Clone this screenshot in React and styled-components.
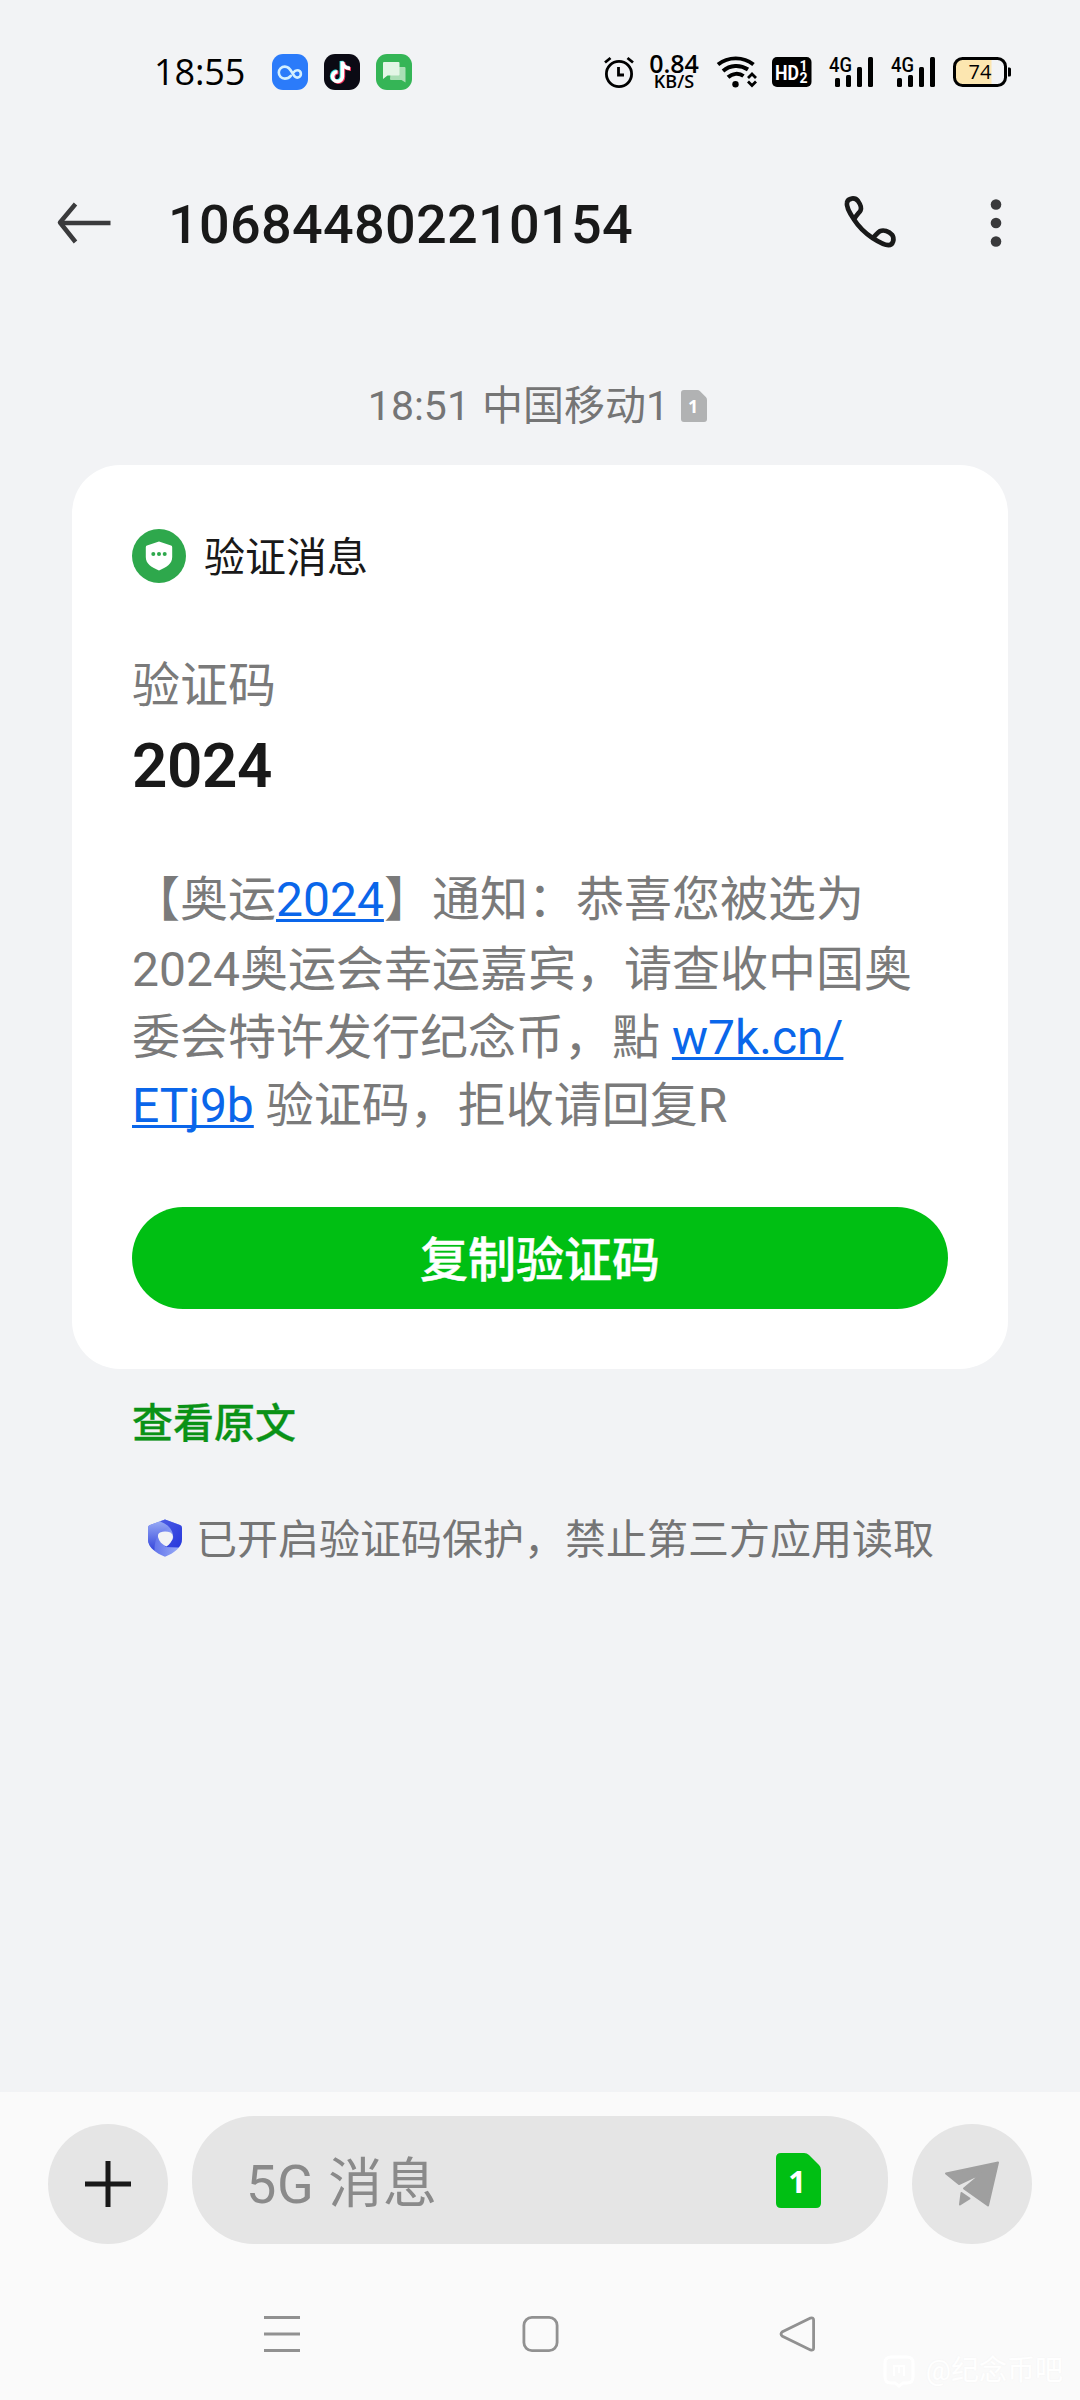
import styled, { createGlobalStyle } from "styled-components";

const GlobalStyle = createGlobalStyle`
  * {
    box-sizing: border-box;
  }
  body {
    margin: 0;
    background: #f2f3f5;
    font-family: Roboto, "Noto Sans CJK SC", sans-serif;
  }
  svg {
    display: block;
    flex-shrink: 0;
    overflow: visible;
  }
`;

const Screen = styled.div`
  position: relative;
  width: 1080px;
  height: 2400px;
  display: flex;
  flex-direction: column;
  background: #f2f3f5;
  overflow: hidden;
`;

/* status bar */

const StatusBar = styled.div`
  height: 144px;
  padding: 0 69px 0 154px;
  display: flex;
  align-items: center;
  justify-content: space-between;
  color: #000;
`;

const StatusGroup = styled.div`
  display: flex;
  align-items: center;
  gap: ${(props) => props.$gap || 0}px;
`;

const Clock = styled.div`
  width: 102px;
  font-family: "Open Sans", sans-serif;
  font-size: 36px;
  line-height: 36px;
  font-weight: 400;
  letter-spacing: -0.1px;
  white-space: nowrap;
`;

const Speed = styled.div`
  width: 52px;
  display: flex;
  flex-direction: column;
  align-items: center;
  font-family: "Open Sans", sans-serif;
  white-space: nowrap;
`;

const SpeedValue = styled.span`
  font-size: 25px;
  line-height: 19px;
  font-weight: 600;
`;

const SpeedUnit = styled.span`
  font-size: 18px;
  line-height: 17px;
  font-weight: 600;
`;

/* header */

const Header = styled.header`
  height: 158px;
  padding: 0 78px 0 56px;
  display: flex;
  align-items: center;
`;

const Title = styled.h1`
  flex: 1;
  margin: 3px 0 0 56px;
  font-size: 54px;
  line-height: 60px;
  font-weight: 500;
  letter-spacing: 0.3px;
  color: #191919;
`;

/* conversation */

const Content = styled.main`
  flex: 1;
  padding: 74px 72px 0;
  display: flex;
  flex-direction: column;
`;

const Meta = styled.div`
  height: 60px;
  padding-right: 5px;
  display: flex;
  align-items: center;
  justify-content: center;
  gap: 12px;
  font-size: 41px;
  line-height: 60px;
  word-spacing: 2px;
  color: #757575;
`;

const Card = styled.section`
  height: 904px;
  margin-top: 29px;
  padding: 64px 60px 60px;
  display: flex;
  flex-direction: column;
  background: #fff;
  border-radius: 48px;
`;

const CardHead = styled.div`
  height: 54px;
  display: flex;
  align-items: center;
  gap: 18px;
  font-size: 41px;
  line-height: 54px;
  color: #191919;
`;

const CardTitle = styled.span`
  padding-top: 3px;
`;

const Label = styled.div`
  margin-top: 73px;
  font-size: 48px;
  line-height: 60px;
  color: #7a7a7a;
`;

const Code = styled.div`
  margin-top: 15px;
  font-size: 62px;
  line-height: 70px;
  font-weight: 600;
  letter-spacing: -0.4px;
  color: #191919;
`;

const Message = styled.div`
  margin-top: 65px;
  font-size: 48px;
  color: #7a7a7a;
`;

const Line = styled.div`
  height: ${(props) => props.$height || 68}px;
  line-height: 68px;
  white-space: nowrap;
`;

const Link = styled.a`
  color: #0a66ea;
  text-decoration: underline;
  text-decoration-thickness: 3px;
  text-underline-offset: 3px;
  text-decoration-skip-ink: none;
`;

const CopyButton = styled.button`
  height: 102px;
  margin-top: 67px;
  padding: 5px 0 0;
  border: none;
  border-radius: 51px;
  background: #00bf13;
  color: #fff;
  font-family: inherit;
  font-size: 48px;
  font-weight: 500;
  line-height: 97px;
  -webkit-text-stroke: 0.5px #fff;
`;

const Original = styled.a`
  margin: 30px 0 0 60px;
  font-size: 41px;
  line-height: 50px;
  font-weight: 500;
  color: #0a9216;
  -webkit-text-stroke: 0.3px #0a9216;
`;

const Protection = styled.div`
  height: 50px;
  margin: 64px 0 0 75px;
  display: flex;
  align-items: center;
  gap: 13px;
  font-size: 41px;
  line-height: 50px;
  color: #757575;
  white-space: nowrap;
`;

const ProtectionText = styled.span`
  padding-top: 3px;
`;

/* bottom */

const Footer = styled.footer`
  height: 308px;
  padding-top: 24px;
  background: #fafafa;
`;

const Composer = styled.div`
  height: 128px;
  padding: 0 48px;
  display: flex;
  align-items: flex-end;
  gap: 24px;
`;

const RoundButton = styled.button`
  width: 120px;
  height: 120px;
  padding: 0;
  border: none;
  border-radius: 50%;
  display: flex;
  align-items: center;
  justify-content: center;
  background: #e5e5e5;
`;

const Field = styled.div`
  flex: 1;
  height: 128px;
  padding: 0 67px 0 54px;
  border-radius: 62px;
  display: flex;
  align-items: center;
  justify-content: space-between;
  background: #e5e5e5;
`;

const Placeholder = styled.span`
  padding-top: 9px;
  font-size: 54px;
  line-height: 64px;
  letter-spacing: 0.6px;
  color: #8a8a8a;
`;

const NavBar = styled.nav`
  height: 156px;
  padding: 24px 263px 0;
  display: flex;
  align-items: center;
  justify-content: space-between;
`;

const Watermark = styled.div`
  position: absolute;
  right: 17px;
  bottom: 9px;
  display: flex;
  align-items: center;
  gap: 11px;
  font-size: 28px;
  line-height: 40px;
  color: #fff;
  text-shadow: 0 0 2px #f3f3f3;
`;

const CloudAppIcon = () => (
  <svg width="36" height="36" viewBox="0 0 36 36" fill="none">
    <rect width="36" height="36" rx="11" fill="#2b7bfa" />
    <path
      d="M18.800 21.800c-1.700 2-3.500 2.800-6 2.800a6 6 0 1 1 0-12c3.800 0 5.700 3 7.200 5.800 1.400 2.700 2.600 5.200 5.200 5.200a3.700 3.700 0 0 0 0-7.400c-2 0-3 1.200-4.200 2.800"
      stroke="#d3efff"
      strokeWidth="2.600"
      strokeLinecap="round"
    />
  </svg>
);

const MusicAppIcon = () => {
  const note = "M18.200 7.500V22.500a4.900 4.900 0 1 1-4.900-4.900M18.200 7.500c.4 4 3.200 6.600 7.600 6.800";
  return (
    <svg width="36" height="36" viewBox="0 0 36 36" fill="none" strokeWidth="3.600">
      <rect width="36" height="36" rx="11" fill="#0b0a14" />
      <path d={note} transform="translate(-.8 -.6)" stroke="#35e6e4" />
      <path d={note} transform="translate(1.200 .8)" stroke="#f7305a" />
      <path d={note} transform="translate(.2 .1)" stroke="#fff" />
    </svg>
  );
};

const ChatAppIcon = () => (
  <svg width="36" height="36" viewBox="0 0 36 36">
    <rect width="36" height="36" rx="11" fill="#35b556" />
    <path d="M15 13h13.500a1 1 0 0 1 1 1v14.500L25.500 26H15a1 1 0 0 1-1-1z" fill="#a9dfb5" />
    <path d="M8 8h14.500a1 1 0 0 1 1 1v11.500a1 1 0 0 1-1 1H11.500L7 25V9a1 1 0 0 1 1-1z" fill="#e3f6e6" />
  </svg>
);

const AlarmIcon = () => (
  <svg width="32" height="32" viewBox="0 0 32 32" fill="none" stroke="#000" strokeWidth="2.800">
    <circle cx="15" cy="18" r="12.600" />
    <path d="M14.500 11v8h5.500M1 6.500 6.500 2M29 6.500 23.500 2" />
  </svg>
);

const WifiIcon = () => (
  <svg width="40" height="32" viewBox="0 0 40 32" fill="none">
    <path
      d="M1 8.500c10-8.200 25.500-8.200 35.500 0M6 15c7-6.200 17-6.700 25-1.500M11 21.300c4.500-4.200 11-4.600 15.500-1.300"
      stroke="#000"
      strokeWidth="3.900"
    />
    <circle cx="18.500" cy="28.300" r="3.200" fill="#000" />
    <path d="m31 22 4-4 4 4M31 25.500l4 4 4-4" stroke="#000" strokeWidth="2.800" />
  </svg>
);

const HdIcon = () => (
  <svg width="40" height="30" viewBox="0 0 40 30" fontFamily="Roboto" fontWeight="700" fill="#fff">
    <rect width="39.500" height="30" rx="5" fill="#000" />
    <text x="3" y="22.500" fontSize="21" textLength="24" lengthAdjust="spacingAndGlyphs">HD</text>
    <text x="27.500" y="14" fontSize="14">1</text>
    <text x="27.500" y="25.500" fontSize="14">2</text>
  </svg>
);

const SignalIcon = () => (
  <svg width="45" height="30" viewBox="0 0 45 30">
    <text x="0" y="15" fontFamily="Roboto" fontSize="20" fontWeight="500" textLength="23" lengthAdjust="spacingAndGlyphs">4G</text>
    <rect x="6" y="21" width="5" height="9" rx="1.500" />
    <rect x="17" y="18" width="5" height="12" rx="1.500" />
    <rect x="28" y="10" width="5" height="20" rx="1.500" />
    <rect x="39" y="0" width="5" height="30" rx="1.500" />
  </svg>
);

const BatteryIcon = () => (
  <svg width="58" height="30" viewBox="0 0 58 30">
    <rect x="1.500" y="1.500" width="51" height="27" rx="8" fill="#f2f3f5" />
    <path d="M9 2H38.500V28H9a7 7 0 0 1-7-7V9a7 7 0 0 1 7-7z" fill="#fce6b0" />
    <rect x="1.500" y="1.500" width="51" height="27" rx="8" fill="none" stroke="#000" strokeWidth="3" />
    <path d="M55 10.500h1.500a1.500 1.500 0 0 1 1.500 1.500v6a1.500 1.500 0 0 1-1.500 1.500H55z" />
    <text x="27" y="22" fontFamily="Open Sans" fontSize="20" textAnchor="middle" textLength="23">74</text>
  </svg>
);

const BackIcon = () => (
  <svg width="56" height="44" viewBox="0 0 56 44" fill="none" stroke="#3a3a3c" strokeWidth="4.500">
    <path d="M19.500 3 4 21.500 19.500 41" strokeLinejoin="round" />
    <path d="M4 22h50.500" />
  </svg>
);

const PhoneIcon = () => (
  <svg width="56" height="56" viewBox="0 0 56 56" fill="none" stroke="#191919" strokeWidth="4.700" strokeLinejoin="round">
    <path d="M13 24.500C8 17 5.200 10.500 6 7.500c1-4.500 8-5.500 11-1.500 2.500 3.500 4 6.500 2.500 9.500-1 2-5 5.500-6.500 9 4.500 7 11 13.500 18.500 18.500 7 4.500 12.500 7.200 16 7.200 4.500 0 6.500-6.500 3.500-10.500-3-3.500-8.500-5.200-12-3.500-2.500 1.300-4.500 4.500-7.500 6.800" />
  </svg>
);

const MoreIcon = () => (
  <svg width="12" height="50" viewBox="0 0 12 50" fill="#3a3a3c">
    <circle cx="6" cy="6.500" r="5.300" />
    <circle cx="6" cy="25" r="5.300" />
    <circle cx="6" cy="43.500" r="5.300" />
  </svg>
);

const SimIcon = ({ width, height, color }) => (
  <svg width={width} height={height} viewBox="0 0 45 55">
    <path d="M5 0H28q3 0 5 2L43 12q2 2 2 5V50q0 5-5 5H5q-5 0-5-5V5q0-5 5-5z" fill={color} />
    <text x="21" y="40" fontFamily="Open Sans" fontSize="31" fontWeight="700" textAnchor="middle" fill="#fff">1</text>
  </svg>
);

const VerifyIcon = () => (
  <svg width="54" height="54" viewBox="0 0 54 54">
    <circle cx="27" cy="27" r="27" fill="#2ea84c" />
    <path d="M27 12.500 39 16.500q1.200.4 1.200 1.700V28c0 7-6 10.500-13.200 13.500C19.800 38.500 13.800 35 13.800 28v-9.800q0-1.300 1.200-1.700z" fill="#fff" />
    <g fill="#2ea84c">
      <circle cx="21.300" cy="25" r="2" />
      <circle cx="27" cy="25" r="2" />
      <circle cx="32.700" cy="25" r="2" />
    </g>
  </svg>
);

const ShieldIcon = () => (
  <svg width="36" height="38" viewBox="0 0 36 38">
    <defs>
      <linearGradient id="shieldLeft" x1="0" y1="0" x2="0" y2="1">
        <stop offset="0" stopColor="#9db0f6" />
        <stop offset="1" stopColor="#3445dc" />
      </linearGradient>
      <linearGradient id="shieldRight" x1="0" y1="0" x2="1" y2="1">
        <stop offset="0" stopColor="#4c5ce4" />
        <stop offset="1" stopColor="#2738dc" />
      </linearGradient>
      <linearGradient id="shieldBottom" x1="0" y1="0" x2="1" y2="0">
        <stop offset="0" stopColor="#5566e8" />
        <stop offset="1" stopColor="#9fb2f8" />
      </linearGradient>
    </defs>
    <path d="M18 .5 33 6q2 .7 2 3v11c0 9-8 14-17 17.800C9 34 1 29 1 20V9q0-2.300 2-3z" fill="url(#shieldBottom)" />
    <path d="M18 .5 3 6Q1 6.700 1 9v11c0 5 2.500 8.500 6.500 11.500 0-8 2-14 5.500-18.500L24 6z" fill="url(#shieldLeft)" />
    <path d="M13 2.400 18 .5 33 6q2 .7 2 3v11c0 4-1.500 6.500-3.500 8.500L18 28l8-8c1-7-3-14-13-17.600z" fill="url(#shieldRight)" />
    <path d="M13 13.500q5-2 10.500 0 2.500 1.500 2.500 4.500c-.8 4-3.300 7.500-6.500 9.500-4.500-2-7.500-5-8.500-9.500-.2-2.500.5-3.800 2-4.500z" fill="#f2f3f5" />
  </svg>
);

const PlusIcon = () => (
  <svg width="46" height="46" viewBox="0 0 46 46" stroke="#191919" strokeWidth="5">
    <path d="M0 23H46M23 0V46" />
  </svg>
);

const SendIcon = () => (
  <svg width="56" height="46" viewBox="0 0 56 46" fill="#9f9f9f" stroke="#9f9f9f" strokeWidth="2" strokeLinejoin="round">
    <path d="M2 12.500 54 1.500 44 44.500 20 27.500 38.500 12 15 23z" />
    <path d="m17.500 32 8 5.500L16 43.500z" />
  </svg>
);

const RecentsIcon = () => (
  <svg width="38" height="36" viewBox="0 0 38 36" stroke="#919191" strokeWidth="3">
    <path d="M1 1.500H37M1 18H37M1 34.500H37" />
  </svg>
);

const HomeIcon = () => (
  <svg width="36" height="36" viewBox="0 0 36 36" fill="none" stroke="#919191" strokeWidth="2.800">
    <rect x="0.900" y="1.400" width="33.200" height="33.200" rx="8" />
  </svg>
);

const NavBackIcon = () => (
  <svg width="37" height="36" viewBox="0 0 37 36" fill="none" stroke="#919191" strokeWidth="2.800">
    <path d="M30.500 2.100 2.500 15.700q-3 2.300 0 4.600L30.500 33.900q3.100 1 3.100-2V4.100q0-3-3.100-2z" />
  </svg>
);

const WatermarkIcon = () => (
  <svg width="32" height="32" viewBox="0 0 32 32" fill="none" stroke="#fff" strokeWidth="3">
    <path d="M8 2H24q6 0 6 6V22q0 6-6 6H20l-4 3-4-3H8q-6 0-6-6V8q0-6 6-6z" />
    <path d="M11 21V11H21V21M16 12v6" strokeWidth="2" />
  </svg>
);

const App = () => {
  return (
    <Screen>
      <GlobalStyle />
      <StatusBar>
        <StatusGroup $gap={16}>
          <Clock>18:55</Clock>
          <CloudAppIcon />
          <MusicAppIcon />
          <ChatAppIcon />
        </StatusGroup>
        <StatusGroup $gap={17}>
          <StatusGroup $gap={12}>
            <AlarmIcon />
            <Speed>
              <SpeedValue>0.84</SpeedValue>
              <SpeedUnit>KB/S</SpeedUnit>
            </Speed>
          </StatusGroup>
          <StatusGroup $gap={15}>
            <WifiIcon />
            <HdIcon />
          </StatusGroup>
          <SignalIcon />
          <SignalIcon />
          <BatteryIcon />
        </StatusGroup>
      </StatusBar>

      <Header>
        <BackIcon />
        <Title>106844802210154</Title>
        <StatusGroup $gap={93}>
          <PhoneIcon />
          <MoreIcon />
        </StatusGroup>
      </Header>

      <Content>
        <Meta>
          <span>18:51 中国移动1</span>
          <SimIcon width={26} height={32} color="#b1b2b3" />
        </Meta>
        <Card>
          <CardHead>
            <VerifyIcon />
            <CardTitle>验证消息</CardTitle>
          </CardHead>
          <Label>验证码</Label>
          <Code>2024</Code>
          <Message>
            <Line $height={70}>
              【奥运<Link>2024</Link>】通知：恭喜您被选为
            </Line>
            <Line>2024奥运会幸运嘉宾，请查收中国奥</Line>
            <Line>
              委会特许发行纪念币，點 <Link>w7k.cn/</Link>
            </Line>
            <Line>
              <Link>ETj9b</Link> 验证码，拒收请回复R
            </Line>
          </Message>
          <CopyButton>复制验证码</CopyButton>
        </Card>
        <Original>查看原文</Original>
        <Protection>
          <ShieldIcon />
          <ProtectionText>已开启验证码保护，禁止第三方应用读取</ProtectionText>
        </Protection>
      </Content>

      <Footer>
        <Composer>
          <RoundButton>
            <PlusIcon />
          </RoundButton>
          <Field>
            <Placeholder>5G 消息</Placeholder>
            <SimIcon width={45} height={55} color="#00bf13" />
          </Field>
          <RoundButton>
            <SendIcon />
          </RoundButton>
        </Composer>
        <NavBar>
          <RecentsIcon />
          <HomeIcon />
          <NavBackIcon />
        </NavBar>
      </Footer>

      <Watermark>
        <WatermarkIcon />
        <span>@纪念币吧</span>
      </Watermark>
    </Screen>
  );
};

export default App;
